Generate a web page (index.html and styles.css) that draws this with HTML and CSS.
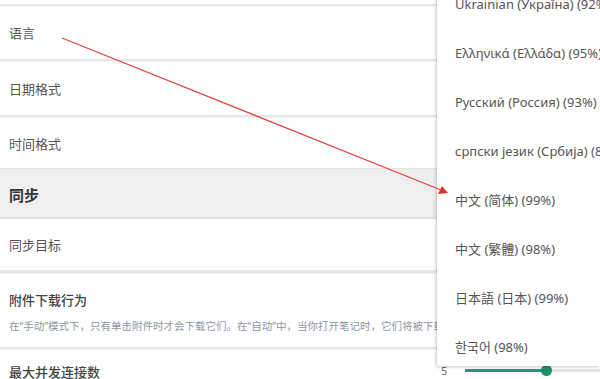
FILE: index.html
```html
<!DOCTYPE html>
<html lang="zh-CN">
<head>
    <meta charset="UTF-8">
    <meta name="viewport" content="width=device-width, initial-scale=1.0">
    <title>设置</title>
    <link rel="stylesheet" href="styles.css">
</head>
<body>
    <div class="settings">
        <div class="row stub"></div>
        <div class="row lang"><span class="label">语言</span></div>
        <div class="row date"><span class="label">日期格式</span></div>
        <div class="row time"><span class="label">时间格式</span></div>
        <div class="section">同步</div>
        <div class="row target"><span class="label">同步目标</span></div>
        <div class="row attach">
            <span class="label strong">附件下载行为</span>
            <span class="desc">在“手动”模式下，只有单击附件时才会下载它们。在“自动”中，当你打开笔记时，它们将被下载。</span>
        </div>
        <div class="row conn">
            <span class="label strong">最大并发连接数</span>
            <div class="slider-box">
                <span class="value">5</span>
                <div class="track"><div class="fill"></div><div class="thumb"></div></div>
            </div>
        </div>
    </div>

    <ul class="menu">
        <li>Ukrainian (Україна) (92%)</li>
        <li>Ελληνικά (Ελλάδα) (95%)</li>
        <li>Русский (Россия) (93%)</li>
        <li>српски језик (Србија) (89%)</li>
        <li>中文 (简体) (99%)</li>
        <li>中文 (繁體) (98%)</li>
        <li>日本語 (日本) (99%)</li>
        <li>한국어 (98%)</li>
    </ul>

    <svg class="arrow" width="600" height="379" viewBox="0 0 600 379">
        <line x1="62" y1="38" x2="441" y2="190" stroke="#e0463f" stroke-width="1.3"/>
        <polygon points="448,193 438,194 442,186" fill="#e0302a"/>
    </svg>
</body>
</html>
```

FILE: styles.css
```css
body {
    margin: 0;
    font-family: "Noto Sans", "Noto Sans CJK SC", sans-serif;
    background-color: #ffffff;
    color: #555;
    overflow: hidden;
    position: relative;
    height: 379px;
}
.settings {
    display: flex;
    flex-direction: column;
}
.row {
    display: flex;
    align-items: center;
    padding-left: 9px;
    border-bottom: 2px solid #e6e6e6;
    box-shadow: 0 1px 1px rgba(0, 0, 0, 0.04);
    font-size: 13px;
}
.stub {
    height: 4px;
}
.lang {
    height: 53px;
}
.date {
    height: 54px;
}
.time {
    height: 52px;
    border-bottom: none;
    box-shadow: none;
}
.section {
    height: 45px;
    padding-top: 3px;
    padding-left: 9px;
    display: flex;
    align-items: center;
    background-color: #efefef;
    border-top: 1px solid #e4e4e4;
    border-bottom: 2px solid #e2e2e2;
    margin-top: -1px;
    font-size: 15px;
    font-weight: bold;
    color: #333;
}
.target {
    height: 51px;
    border-bottom-width: 3px;
}
.attach {
    height: 76px;
    flex-direction: column;
    align-items: flex-start;
    justify-content: center;
    gap: 9px;
    padding-top: 2px;
    box-sizing: border-box;
}
.label.strong {
    color: #444;
    font-weight: 500;
}
.desc {
    font-size: 10.5px;
    color: #8e96a3;
    white-space: nowrap;
}
.conn {
    height: 42px;
    border-bottom: none;
    justify-content: space-between;
    align-items: flex-start;
    padding-top: 13px;
    box-sizing: border-box;
}
.slider-box {
    display: flex;
    align-items: center;
    width: 163px;
    margin-top: 1px;
}
.value {
    width: 28px;
    font-size: 11px;
    color: #666;
    padding-left: 4px;
    box-sizing: border-box;
}
.track {
    position: relative;
    flex: 1;
    height: 3px;
    background-color: #e4e4e4;
}
.fill {
    width: 82px;
    height: 3px;
    background-color: #1f9a78;
}
.thumb {
    position: absolute;
    left: 76px;
    top: -4px;
    width: 11px;
    height: 11px;
    border-radius: 50%;
    background-color: #1f8f6f;
}
.menu {
    position: absolute;
    top: -21px;
    left: 437px;
    right: 0;
    height: 387px;
    margin: 0;
    padding: 0;
    list-style: none;
    overflow: hidden;
    background-color: #fff;
    box-shadow: -1px 1px 3px rgba(0, 0, 0, 0.22);
}
.menu li {
    height: 49px;
    display: flex;
    align-items: center;
    padding-left: 18px;
    font-size: 13px;
    color: #555;
    white-space: nowrap;
}
.arrow {
    position: absolute;
    top: 0;
    left: 0;
    pointer-events: none;
}
```
